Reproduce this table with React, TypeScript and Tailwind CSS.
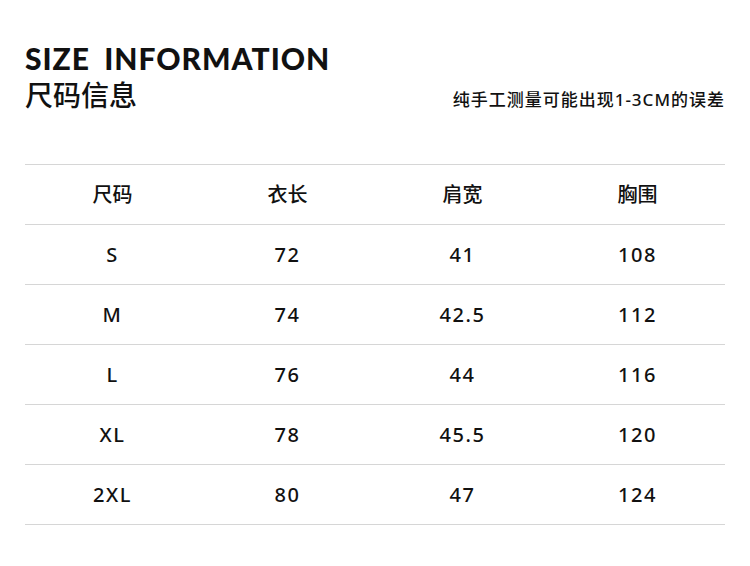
const headers = ['尺码', '衣长', '肩宽', '胸围'];

const rows = [
  ['S', '72', '41', '108'],
  ['M', '74', '42.5', '112'],
  ['L', '76', '44', '116'],
  ['XL', '78', '45.5', '120'],
  ['2XL', '80', '47', '124'],
];

const cjk = "font-['Noto_Sans','Noto_Sans_CJK_SC',sans-serif]";

export default function App() {
  return (
    <div className="w-[750px] h-[566px] bg-white text-[#111] px-[25px] pt-[40px]">
      <div className="flex items-end justify-between">
        <div>
          <h1 className="font-['Lato',sans-serif] font-black text-[30px] leading-[36px] tracking-[1px] [word-spacing:6px]">
            SIZE INFORMATION
          </h1>
          <h2 className={`${cjk} font-medium text-[28px] leading-[34px] mt-[2px]`}>尺码信息</h2>
        </div>
        <p className={`${cjk} font-medium text-[17px] leading-[20px] mb-[2px] tracking-[1px]`}>
          纯手工测量可能出现1-3CM的误差
        </p>
      </div>

      <div className="mt-[52px] border-t border-[#d6d6d6]">
        <div className={`grid grid-cols-4 h-[60px] items-center border-b border-[#d6d6d6] ${cjk} font-medium text-[20px]`}>
          {headers.map((h) => (
            <div key={h} className="text-center">
              {h}
            </div>
          ))}
        </div>
        {rows.map((r) => (
          <div
            key={r[0]}
            className={`grid grid-cols-4 h-[60px] items-center border-b border-[#d6d6d6] ${cjk} font-medium text-[20px] tracking-[1.5px]`}
          >
            {r.map((c, i) => (
              <div key={i} className="text-center">
                {c}
              </div>
            ))}
          </div>
        ))}
      </div>
    </div>
  );
}
